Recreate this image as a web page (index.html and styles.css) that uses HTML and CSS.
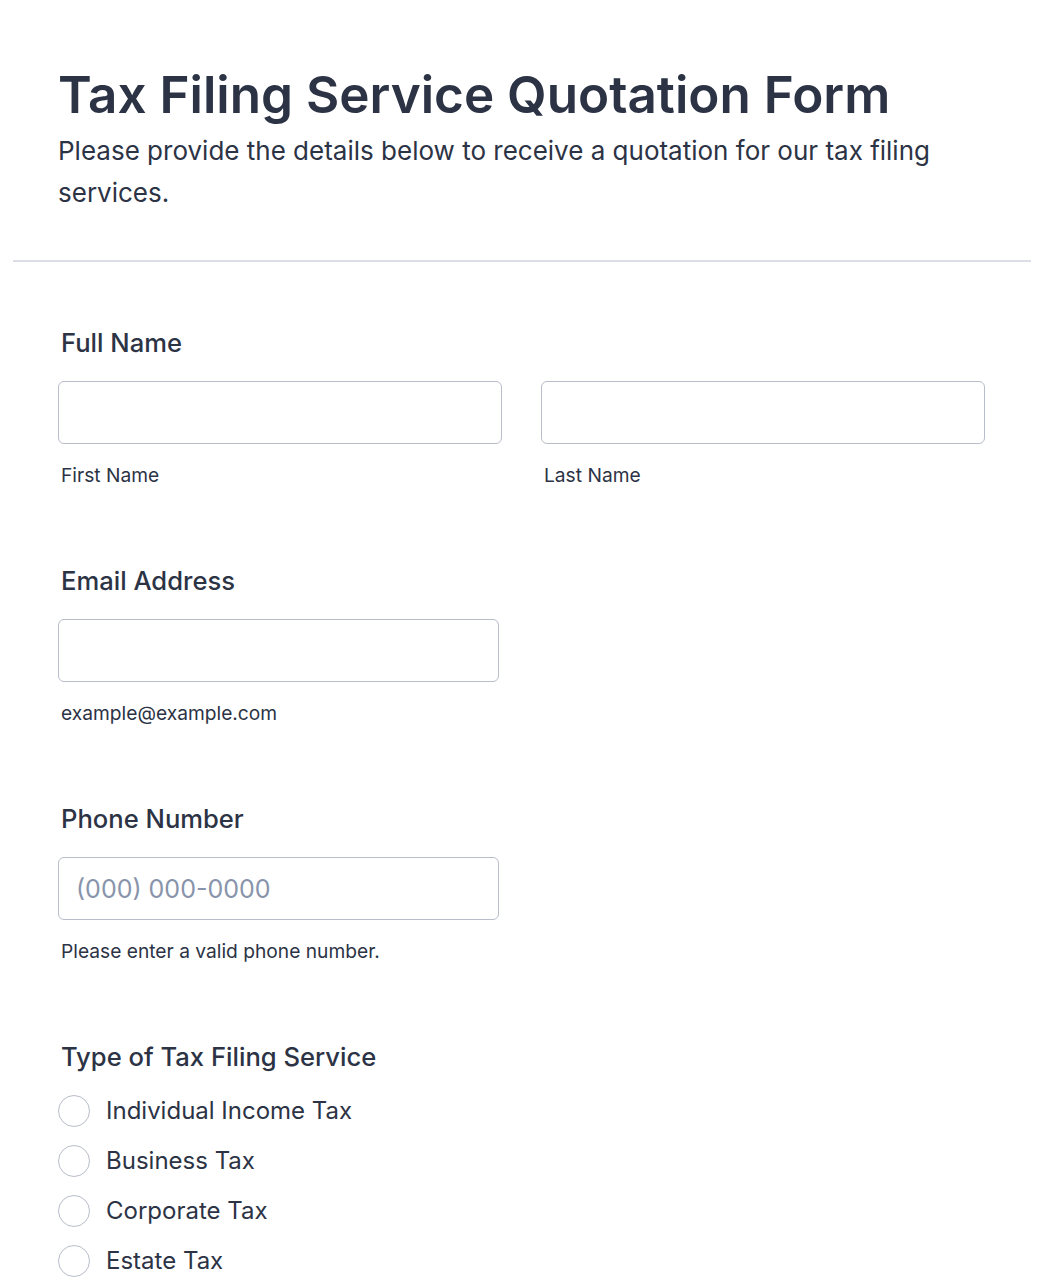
FILE: index.html
```html
<!DOCTYPE html>
<html lang="en">
<head>
<meta charset="utf-8">
<title>Tax Filing Service Quotation Form</title>
<link rel="stylesheet" href="styles.css">
</head>
<body>
<form class="form">
  <header class="form-header">
    <h1 class="form-title">Tax Filing Service Quotation Form</h1>
    <p class="form-subtitle">Please provide the details below to receive a quotation for our tax filing services.</p>
  </header>
  <div class="form-body">
    <div class="field">
      <label class="field-label">Full Name</label>
      <div class="name-row">
        <div class="name-col">
          <input class="text-input" type="text">
          <span class="sublabel">First Name</span>
        </div>
        <div class="name-col">
          <input class="text-input" type="text">
          <span class="sublabel">Last Name</span>
        </div>
      </div>
    </div>
    <div class="field">
      <label class="field-label">Email Address</label>
      <div class="single-col">
        <input class="text-input" type="email">
        <span class="sublabel">example@example.com</span>
      </div>
    </div>
    <div class="field">
      <label class="field-label">Phone Number</label>
      <div class="single-col">
        <input class="text-input" type="tel" placeholder="(000) 000-0000">
        <span class="sublabel">Please enter a valid phone number.</span>
      </div>
    </div>
    <div class="field">
      <label class="field-label">Type of Tax Filing Service</label>
      <div class="radio-list">
        <label class="radio-item"><span class="radio-circle"></span><span class="radio-text">Individual Income Tax</span></label>
        <label class="radio-item"><span class="radio-circle"></span><span class="radio-text">Business Tax</span></label>
        <label class="radio-item"><span class="radio-circle"></span><span class="radio-text">Corporate Tax</span></label>
        <label class="radio-item"><span class="radio-circle"></span><span class="radio-text">Estate Tax</span></label>
      </div>
    </div>
  </div>
</form>
</body>
</html>
```
FILE: styles.css
```css
* { box-sizing: border-box; }
html, body {
  margin: 0;
  padding: 0;
  background: #ffffff;
}
body {
  font-family: Inter, "Noto Sans", sans-serif;
  color: #2c3345;
}
.form {
  margin: 0 13px;
}
.form-header {
  padding: 64px 45px 46px;
  border-bottom: 2px solid #dcdee6;
}
.form-title {
  margin: 0;
  font-size: 51.2px;
  line-height: 60px;
  font-weight: 600;
}
.form-subtitle {
  margin: 6px 0 0;
  font-size: 26px;
  line-height: 42px;
  font-weight: 400;
}
.form-body {
  padding: 66px 45px 0;
}
.field {
  display: flex;
  flex-direction: column;
  margin-bottom: 80px;
}
.field:last-child {
  margin-bottom: 0;
}
.field-label {
  font-size: 25.6px;
  line-height: 30px;
  font-weight: 500;
  padding-left: 3px;
  margin-bottom: 23px;
}
.name-row {
  display: flex;
  gap: 39px;
}
.name-col {
  display: flex;
  flex-direction: column;
  width: 444px;
}
.single-col {
  display: flex;
  flex-direction: column;
  width: 441px;
}
.text-input {
  width: 100%;
  height: 63px;
  border: 1.5px solid #b8bdc9;
  border-radius: 6px;
  padding: 0 17px;
  font-family: Inter, "Noto Sans", sans-serif;
  font-size: 25px;
  color: #2c3345;
  background: #fff;
  outline: none;
}
.text-input::placeholder {
  color: #8894ab;
}
.sublabel {
  margin-top: 20px;
  font-size: 19.2px;
  line-height: 22px;
  padding-left: 3px;
}
.radio-list {
  display: flex;
  flex-direction: column;
  gap: 18px;
}
.radio-item {
  display: flex;
  align-items: center;
  gap: 16px;
  height: 32px;
}
.radio-circle {
  width: 32px;
  height: 32px;
  border-radius: 50%;
  border: 1.5px solid #b8bdc9;
  flex: none;
}
.radio-text {
  font-size: 24px;
  line-height: 32px;
}
```
